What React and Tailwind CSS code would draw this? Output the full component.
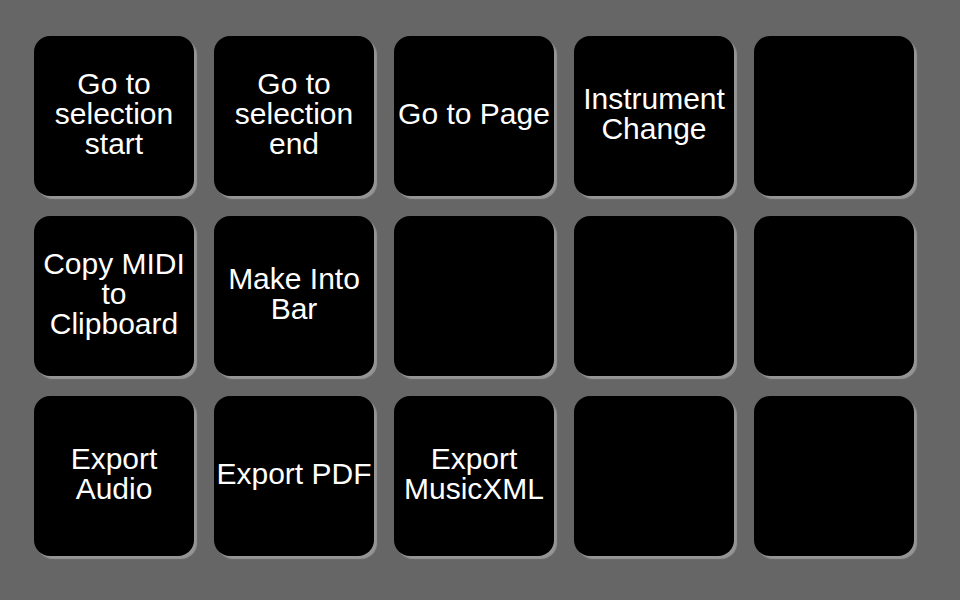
const pads = [
  "Go to selection start",
  "Go to selection end",
  "Go to Page",
  "Instrument Change",
  "",
  "Copy MIDI to Clipboard",
  "Make Into Bar",
  "",
  "",
  "",
  "Export Audio",
  "Export PDF",
  "Export MusicXML",
  "",
  "",
];

export default function App() {
  return (
    <div className="w-[960px] h-[600px] bg-[#666666] pl-[34px] pt-[36px] font-['Liberation_Sans',Arial,sans-serif]">
      <div className="grid grid-cols-[repeat(5,160px)] grid-rows-[repeat(3,160px)] gap-5">
        {pads.map((label, i) => (
          <button
            key={i}
            className="w-40 h-40 pb-1 rounded-2xl bg-black text-white text-[30px] leading-[30px] flex items-center justify-center text-center shadow-[3px_3px_1px_#959595]"
          >
            {label}
          </button>
        ))}
      </div>
    </div>
  );
}
